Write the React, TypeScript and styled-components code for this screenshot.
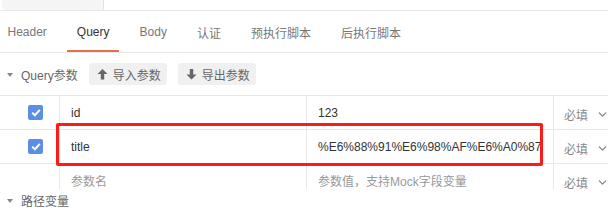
import styled, { createGlobalStyle } from "styled-components";
import { ChevronDown } from "lucide-react";

const GlobalStyle = createGlobalStyle`
  html, body {
    margin: 0;
    padding: 0;
    background: #fff;
    overflow: hidden;
  }
  body {
    font-family: "Liberation Sans", "Noto Sans CJK SC", sans-serif;
    font-size: 12px;
    color: #333;
  }
`;

const Page = styled.div`
  width: 608px;
  height: 215px;
  display: flex;
  flex-direction: column;
`;

const TopStrip = styled.div`
  height: 10px;
  border-bottom: 1px solid #e8e8e8;
  display: flex;
`;

const UrlBox = styled.div`
  width: 101px;
  margin-left: 2px;
  background: #f5f5f5;
  border-right: 1px solid #e3e3e3;
  border-bottom-left-radius: 4px;
`;

const TabBar = styled.div`
  height: 41px;
  display: flex;
  gap: 11px;
  margin-left: -2px;
  border-bottom: 1px solid #e8e8e8;
`;

const Tab = styled.div<{ $active?: boolean }>`
  position: relative;
  padding: 1px 9.5px 0;
  display: flex;
  align-items: center;
  white-space: nowrap;
  color: ${(p) => (p.$active ? "#333" : "#777")};

  &::after {
    content: "";
    display: ${(p) => (p.$active ? "block" : "none")};
    position: absolute;
    left: 0;
    right: 0;
    bottom: 0;
    height: 2px;
    background: #e2704a;
  }
`;

const SectionHead = styled.div<{ $height: number }>`
  height: ${(p) => p.$height}px;
  display: flex;
  align-items: center;
  padding-left: 7px;
  color: #666;
`;

const Caret = styled.span`
  width: 0;
  height: 0;
  border-left: 3.5px solid transparent;
  border-right: 3.5px solid transparent;
  border-top: 4px solid #888;
  margin-right: 8px;
  margin-top: 1px;
`;

const ToolButton = styled.button`
  height: 22px;
  margin-left: 11px;
  padding: 0 6px 0 8px;
  display: flex;
  align-items: center;
  gap: 5px;
  border: none;
  border-radius: 3px;
  background: #f0f0f0;
  color: #666;
  font: inherit;
`;

const TableWrap = styled.div`
  position: relative;
  height: 93px;
  overflow: hidden;
  border-top: 1px solid #e8e8e8;
`;

const Row = styled.div`
  display: grid;
  grid-template-columns: 59px 247px 247px 1fr;
  height: 33px;
  border-bottom: 1px solid #e8e8e8;
`;

const Cell = styled.div<{ $muted?: boolean }>`
  display: flex;
  align-items: center;
  padding-left: 11px;
  min-width: 0;
  white-space: nowrap;
  overflow: hidden;
  border-left: 1px solid #e8e8e8;
  color: ${(p) => (p.$muted ? "#999" : "#333")};

  &:first-child {
    border-left: none;
    padding-left: 28px;
  }
`;

const RequiredCell = styled(Cell)`
  padding-left: 10px;
  padding-top: 3px;
  gap: 8px;
  color: #888;

  svg {
    flex-shrink: 0;
  }
`;

const Check = styled.span`
  width: 15px;
  height: 15px;
  border-radius: 2px;
  background: #5b8fe6;
  display: flex;
  align-items: center;
  justify-content: center;
`;

const Highlight = styled.div`
  position: absolute;
  left: 56px;
  top: 27px;
  width: 481px;
  height: 37px;
  border: 3px solid #ff1a1a;
  border-radius: 2px;
  pointer-events: none;
`;

const ArrowUp = () => (
  <svg width="11" height="12" viewBox="0 0 11 12">
    <path d="M5.5 1 L10.5 6 L7.2 6 L7.2 11.5 L3.8 11.5 L3.8 6 L0.5 6 Z" fill="#666" />
  </svg>
);

const ArrowDown = () => (
  <svg width="11" height="12" viewBox="0 0 11 12">
    <path d="M5.5 11.5 L10.5 6.5 L7.2 6.5 L7.2 1 L3.8 1 L3.8 6.5 L0.5 6.5 Z" fill="#666" />
  </svg>
);

const Tick = () => (
  <svg width="10" height="9" viewBox="0 0 10 9">
    <path d="M1.2 4.6 L3.9 7.2 L8.8 1.8" stroke="#fff" strokeWidth="2" fill="none" />
  </svg>
);

const tabs = ["Header", "Query", "Body", "认证", "预执行脚本", "后执行脚本"];

const rows = [
  { name: "id", value: "123", on: true },
  { name: "title", value: "%E6%88%91%E6%98%AF%E6%A0%87", on: true },
  { name: "参数名", value: "参数值，支持Mock字段变量", on: false, placeholder: true },
];

export default function App() {
  return (
    <Page>
      <GlobalStyle />
      <TopStrip>
        <UrlBox />
      </TopStrip>

      <TabBar>
        {tabs.map((t) => (
          <Tab key={t} $active={t === "Query"}>
            {t}
          </Tab>
        ))}
      </TabBar>

      <SectionHead $height={42}>
        <Caret />
        Query参数
        <ToolButton>
          <ArrowUp />
          导入参数
        </ToolButton>
        <ToolButton>
          <ArrowDown />
          导出参数
        </ToolButton>
      </SectionHead>

      <TableWrap>
        {rows.map((r) => (
          <Row key={r.name}>
            <Cell>{r.on && <Check><Tick /></Check>}</Cell>
            <Cell $muted={r.placeholder}>{r.name}</Cell>
            <Cell $muted={r.placeholder}>{r.value}</Cell>
            <RequiredCell>
              必填
              <ChevronDown size={13} color="#888" strokeWidth={2.5} />
            </RequiredCell>
          </Row>
        ))}
        <Highlight />
      </TableWrap>

      <SectionHead $height={22}>
        <Caret />
        路径变量
      </SectionHead>
    </Page>
  );
}
